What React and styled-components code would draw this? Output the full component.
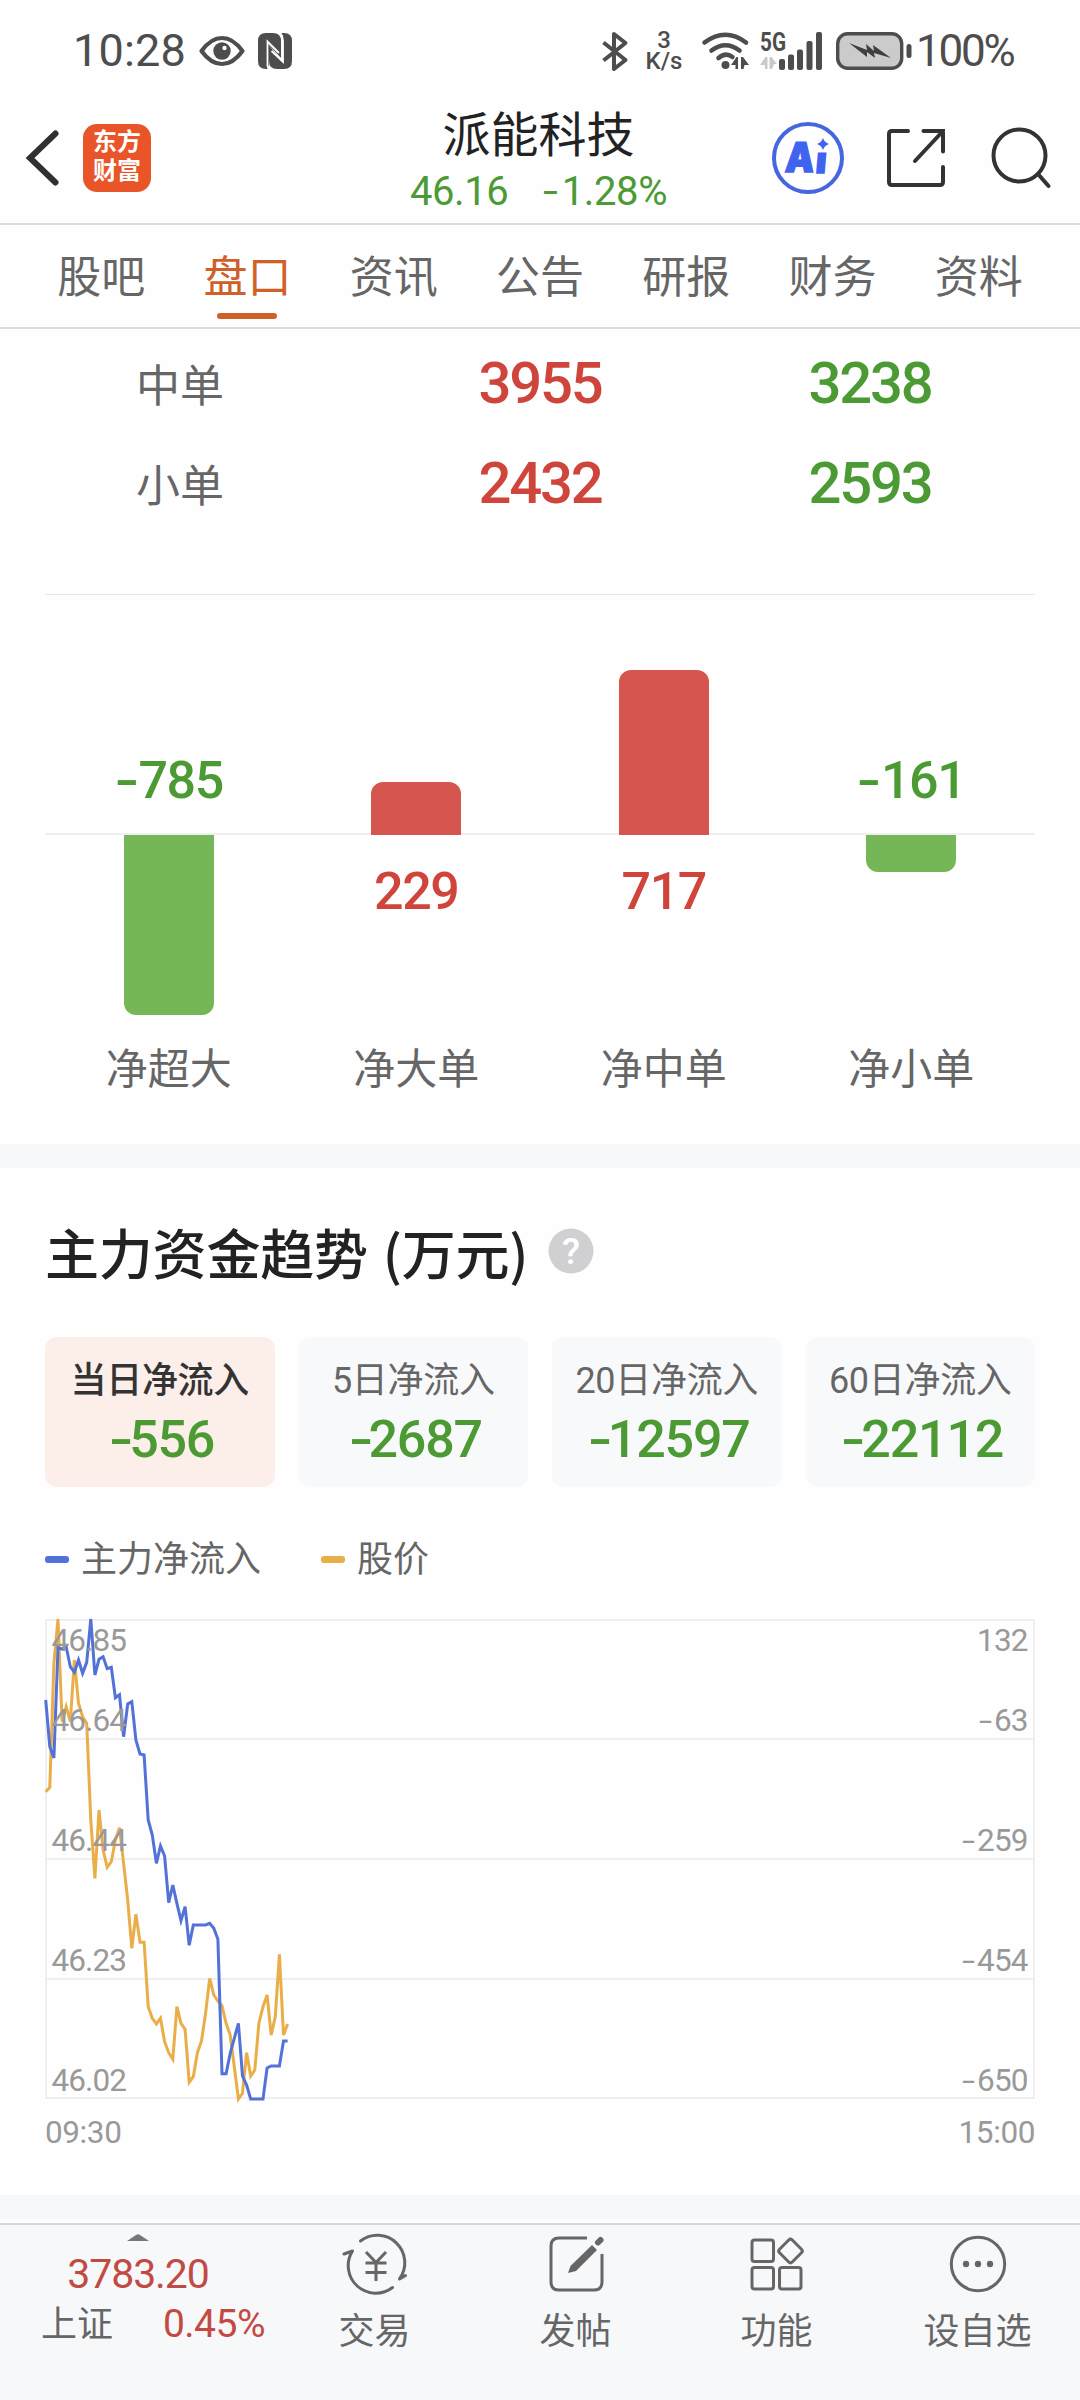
import React from 'react';
import styled, { createGlobalStyle } from 'styled-components';

const GlobalStyles = createGlobalStyle`
  * {
    box-sizing: border-box;
  }
  body {
    margin: 0;
    background: #fefefe;
    color: #666;
    font-family: Roboto, 'Noto Sans CJK SC', sans-serif;
  }
  svg {
    display: block;
    overflow: visible;
  }
`;

const colors = {
  up: '#d0453b',
  down: '#4b9a33',
  flow: '#5272d8',
  price: '#eaae48',
};

const PageStyles = styled.div`
  width: 1080px;
  height: 2400px;
  display: flex;
  flex-direction: column;
  overflow: hidden;
`;

const StatusBarStyles = styled.div`
  height: 102px;
  padding: 0 67px 0 73px;
  display: flex;
  align-items: center;
  justify-content: space-between;
  color: #4d4d4d;
  font-size: 45px;
  line-height: 104px;
  .group {
    display: flex;
    align-items: center;
  }
  .clock {
    width: 126px;
    letter-spacing: 0.2px;
  }
  .speed {
    width: 42px;
    margin: 0 17px 0 15px;
    display: flex;
    flex-direction: column;
    font-size: 24px;
    font-weight: 500;
    line-height: 21px;
    text-align: center;
  }
  .percent {
    width: 97px;
    margin-left: 4px;
    font-size: 44px;
    letter-spacing: -2.2px;
    white-space: nowrap;
  }
`;

const EyeIcon = styled.svg`
  margin-right: 13px;
`;

const BatteryIcon = styled.svg`
  margin-left: 14px;
`;

const SignalIcon = styled.svg`
  margin-left: 10px;
`;

const HeaderStyles = styled.header`
  height: 123px;
  padding: 0 29px 0 26px;
  display: grid;
  grid-template-columns: 280px 1fr 280px;
  border-bottom: 2px solid #dcdcdc;
  .left {
    display: flex;
    align-items: center;
    gap: 25px;
    padding-bottom: 10px;
  }
  .right {
    display: flex;
    align-items: center;
    justify-content: flex-end;
    padding-bottom: 10px;
  }
  .title {
    display: flex;
    flex-direction: column;
    align-items: center;
    padding-top: 3px;
  }
  h1 {
    margin: 0;
    color: #222;
    font-size: 48px;
    font-weight: 400;
    line-height: 62px;
  }
`;

const ShareIcon = styled.svg`
  margin: 0 46px 0 43px;
`;

const LogoStyles = styled.div`
  width: 68px;
  height: 68px;
  border-radius: 14px;
  padding-top: 4px;
  background: #e95428;
  color: #fff;
  font-size: 24px;
  font-weight: 700;
  line-height: 29px;
  text-align: center;
`;

const QuoteStyles = styled.div`
  display: flex;
  gap: 35px;
  color: ${colors.down};
  font-size: 40px;
  line-height: 50px;
  letter-spacing: -0.4px;
`;

const MinusStyles = styled.span`
  display: inline-block;
  width: 0.46em;
  letter-spacing: 0;
  transform: scaleX(1.35);
  transform-origin: 0 50%;
`;

const TabsStyles = styled.nav`
  height: 104px;
  padding: 0 28px;
  display: grid;
  grid-template-columns: repeat(7, 1fr);
  border-bottom: 2px solid #dcdcdc;
`;

const TabStyles = styled.div`
  display: flex;
  flex-direction: column;
  align-items: center;
  color: ${({ $active }) => ($active ? '#d0602a' : '#666')};
  font-size: 44px;
  line-height: 87px;
  padding-top: 10px;
  height: 102px;
  &::after {
    content: '';
    width: 60px;
    height: 6px;
    margin-top: -9px;
    border-radius: 3px;
    background: ${({ $active }) => ($active ? '#d0602a' : 'transparent')};
  }
`;

const OrderTableStyles = styled.div`
  height: 266px;
  margin: 0 45px;
  padding-top: 4px;
  border-bottom: 1px solid #e6e6e6;
`;

const OrderRowStyles = styled.div`
  height: 100px;
  display: grid;
  grid-template-columns: repeat(3, 1fr);
  text-align: center;
  line-height: 100px;
  .label {
    padding: 4px 60px 0 0;
    font-size: 44px;
  }
`;

const OrderValue = styled.div`
  color: ${({ $tone }) => colors[$tone]};
  font-size: 58px;
  font-weight: 500;
  letter-spacing: -2.2px;
`;

const NetBarsStyles = styled.div`
  height: 549px;
  margin: 0 45px;
  display: grid;
  grid-template-columns: repeat(4, 1fr);
`;

const NetColumnStyles = styled.div`
  display: grid;
  grid-template-rows: 240px 180px 1fr;
  justify-items: center;
  .half {
    width: 100%;
    display: flex;
    flex-direction: column;
    align-items: center;
  }
  .upper {
    justify-content: flex-end;
    border-bottom: 2px solid #efefef;
  }
  .label {
    padding-top: 24px;
    font-size: 42px;
    line-height: 62px;
  }
`;

const NetValue = styled.div`
  padding: ${({ $tone }) => ($tone === 'up' ? '26px 0 0' : '0 0 21px')};
  color: ${({ $tone }) => colors[$tone]};
  font-size: 52px;
  font-weight: 500;
  line-height: 62px;
  letter-spacing: -1.4px;
`;

const NetBar = styled.div`
  width: 90px;
  flex-shrink: 0;
  margin-bottom: ${({ $tone }) => ($tone === 'up' ? '-2px' : '0')};
  background: ${({ $tone }) => ($tone === 'up' ? '#d7554f' : '#75b757')};
  border-radius: ${({ $tone }) => ($tone === 'up' ? '12px 12px 0 0' : '0 0 12px 12px')};
`;

const BandStyles = styled.div`
  height: 24px;
  background: #f7f8fa;
`;

const TrendStyles = styled.section`
  height: 1027px;
  padding: 44px 45px 0;
`;

const TrendTitleStyles = styled.div`
  display: flex;
  align-items: center;
  gap: 20px;
  height: 80px;
  h2 {
    margin: 0;
    color: #222;
    font-family: 'Noto Sans CJK SC', sans-serif;
    font-size: 54px;
    font-weight: 500;
    line-height: 80px;
    letter-spacing: -0.2px;
    word-spacing: 3px;
  }
  svg {
    margin-top: -3px;
  }
`;

const PeriodsStyles = styled.div`
  margin-top: 45px;
  display: grid;
  grid-template-columns: repeat(4, 1fr);
  gap: 24px;
`;

const PeriodCardStyles = styled.div`
  height: 150px;
  border-radius: 12px;
  padding-top: 18px;
  background: ${({ $active }) => ($active ? '#fceee8' : '#f8f9fb')};
  text-align: center;
  .name {
    color: ${({ $active }) => ($active ? '#333' : '#666')};
    font-size: 36px;
    font-weight: ${({ $active }) => ($active ? 500 : 400)};
    line-height: 52px;
    letter-spacing: -0.3px;
    white-space: nowrap;
  }
  .value {
    color: ${colors.down};
    font-size: 52px;
    font-weight: 500;
    line-height: 65px;
    letter-spacing: -1.2px;
  }
`;

const LegendStyles = styled.div`
  height: 133px;
  padding-top: 45px;
  display: flex;
  gap: 60px;
  font-size: 36px;
  line-height: 58px;
`;

const LegendItem = styled.div`
  display: flex;
  align-items: center;
  height: 56px;
  &::before {
    content: '';
    width: 24px;
    height: 7px;
    margin: 0 12px 2px 0;
    border-radius: 3px;
    background: ${({ $tone }) => colors[$tone]};
  }
`;

const TimeAxisStyles = styled.div`
  margin-top: 12px;
  display: flex;
  justify-content: space-between;
  color: #999;
  font-size: 31.5px;
  line-height: 44px;
  letter-spacing: -0.4px;
`;

const BottomBarStyles = styled.footer`
  height: 177px;
  margin-top: 4px;
  display: grid;
  grid-template-columns: 274px repeat(4, 201px);
  border-top: 2px solid #d6d8dc;
  background: #f7f8fa;
`;

const IndexStyles = styled.div`
  display: flex;
  flex-direction: column;
  align-items: center;
  padding: 9px 0 0 2px;
  .points {
    margin-top: 8px;
    color: #c34a43;
    font-size: 41px;
    line-height: 50px;
    letter-spacing: -1.1px;
  }
  .row {
    width: 100%;
    padding: 0 9px 0 39px;
    display: flex;
    justify-content: space-between;
    font-size: 36px;
    line-height: 52px;
  }
  .change {
    color: #c34a43;
    font-size: 39px;
    line-height: 51px;
    letter-spacing: -0.5px;
  }
`;

const ActionStyles = styled.div`
  display: flex;
  flex-direction: column;
  align-items: center;
  padding-top: 9px;
  font-size: 36px;
  line-height: 54px;
  svg {
    margin-bottom: 11px;
  }
`;

const tabs = ['股吧', '盘口', '资讯', '公告', '研报', '财务', '资料'];

const orders = [
  { label: '中单', buy: '3955', sell: '3238' },
  { label: '小单', buy: '2432', sell: '2593' },
];

const netOrders = [
  { label: '净超大', value: -785, height: 180 },
  { label: '净大单', value: 229, height: 53 },
  { label: '净中单', value: 717, height: 165 },
  { label: '净小单', value: -161, height: 37 },
];

const periods = [
  { name: '当日净流入', value: -556 },
  { name: '5日净流入', value: -2687 },
  { name: '20日净流入', value: -12597 },
  { name: '60日净流入', value: -22112 },
];

// one sample per minute, measured down the plot in thirds of a pixel
const flowSeries = [
  300, 440, 474, 143, 147, 140, 200, 217, 180, 220, 187, 57, 225, 178, 170,
  206, 202, 293, 284, 410, 312, 305, 420, 462, 465, 660, 705, 790, 738, 768,
  908, 855, 910, 962, 920, 1036, 975, 975, 975, 975, 970, 985, 1018, 1421,
  1421, 1360, 1315, 1270, 1428, 1455, 1497, 1497, 1497, 1497, 1404, 1398,
  1398, 1398, 1323, 1323,
];
const priceSeries = [
  575, 562, 190, 57, 365, 320, 365, 180, 310, 350, 370, 660, 835, 630, 750,
  802, 785, 720, 683, 790, 900, 1045, 943, 1027, 1027, 1220, 1255, 1272, 1255,
  1325, 1358, 1378, 1220, 1270, 1288, 1447, 1430, 1358, 1323, 1240, 1135,
  1185, 1203, 1217, 1270, 1305, 1400, 1497, 1480, 1358, 1428, 1410, 1270,
  1220, 1185, 1305, 1250, 1063, 1305, 1272,
];

const axisLabels = [
  { y: 31, price: '46.85', flow: '132' },
  { y: 111, price: '46.64', flow: '-63' },
  { y: 231, price: '46.44', flow: '-259' },
  { y: 351, price: '46.23', flow: '-454' },
  { y: 471, price: '46.02', flow: '-650' },
];

const toPoints = series =>
  series.map((y, i) => `${(i * 4.1 + 0.7).toFixed(1)},${((y - 60) / 3).toFixed(1)}`).join(' ');

function Signed({ value }) {
  const text = String(value);
  if (!text.startsWith('-')) return text;
  return (
    <>
      <MinusStyles>-</MinusStyles>
      {text.slice(1)}
    </>
  );
}

function StatusBar() {
  return (
    <StatusBarStyles>
      <div className="group">
        <span className="clock">10:28</span>
        <EyeIcon width="46" height="32" viewBox="0 0 46 32">
          <path d="M2.500 16C9 7 16 3 23 3s14 4 20.500 13C37 25 30 29 23 29S9 25 2.500 16Z" fill="none" stroke="#4d4d4d" strokeWidth="4.200" strokeLinejoin="round" />
          <circle cx="23" cy="16" r="8.700" fill="#4d4d4d" />
          <circle cx="25.500" cy="13" r="2.200" fill="#fff" />
        </EyeIcon>
        <svg width="34" height="36" viewBox="0 0 34 36">
          <path d="M8 0H15Q23 0 23 8V25L11 12V36H8Q0 36 0 28V8Q0 0 8 0Z" fill="#4d4d4d" />
          <path d="M24 0H26Q34 0 34 8V28Q34 36 26 36H19Q11 36 11 28V12L23 28L25 27V8Q25 3 22 0Z" fill="#4d4d4d" />
          <path d="M10.500 36Q9 33 9.500 28V8.500L21 20M22.500 0Q25 3 25 8V29L13.500 18" fill="none" stroke="#fff" strokeWidth="1.800" />
        </svg>
      </div>
      <div className="group">
        <svg width="26" height="39" viewBox="0 0 26 39">
          <path d="M1.500 10.500 23.500 28 12 37V2l11.500 9L1.500 28.500" fill="none" stroke="#4d4d4d" strokeWidth="4" strokeLinejoin="round" />
        </svg>
        <div className="speed">
          <span>3</span>
          <span>K/s</span>
        </div>
        <svg width="48" height="38" viewBox="0 0 48 38">
          <g fill="none" stroke="#4d4d4d" strokeWidth="4.600" strokeLinecap="round">
            <path d="M2.500 10.500Q23.500-5 44 10.500" />
            <path d="M9.500 18.500Q23.500 8 37.500 18.500" />
            <path d="M16.500 26Q23.500 20 30.500 25" />
          </g>
          <circle cx="23.500" cy="33" r="4" fill="#4d4d4d" />
          <path d="M36 25v12h-2.500v-4H29l5.500-8ZM39 25h2l6 8h-4.500l-1 4H39Z" fill="#4d4d4d" />
        </svg>
        <SignalIcon width="62" height="38" viewBox="0 0 62 38">
          <text x="0" y="18.500" fontSize="25" fontWeight="700" fill="#4d4d4d" textLength="26" lengthAdjust="spacingAndGlyphs">5G</text>
          <path d="M7.500 25v12H5v-4H0l5.500-8ZM9.500 25h2l5.500 7h-3l-2 5H9.500Z" fill="#c9c9c9" />
          <g fill="#4d4d4d">
            <rect x="19" y="27" width="6" height="11" rx="2" />
            <rect x="28" y="22.500" width="6" height="15.500" rx="2" />
            <rect x="37" y="17.500" width="6" height="20.500" rx="2" />
            <rect x="46.500" y="9" width="6" height="29" rx="2" />
            <rect x="56" y="0" width="6" height="38" rx="2" />
          </g>
        </SignalIcon>
        <BatteryIcon width="76" height="38" viewBox="0 0 76 38">
          <rect x="1.700" y="1.700" width="64" height="34.600" rx="10" fill="#cbcbcb" stroke="#4d4d4d" strokeWidth="3.400" />
          <path d="M13 11 31 18 30 12 38 19 37 13 55 26 38 21 39 26 31 20 31 25Z" fill="#3f3f3f" />
          <rect x="70.500" y="12" width="5" height="14" rx="2.500" fill="#4d4d4d" />
        </BatteryIcon>
        <span className="percent">100%</span>
      </div>
    </StatusBarStyles>
  );
}

function Header() {
  return (
    <HeaderStyles>
      <div className="left">
        <svg width="32" height="56" viewBox="0 0 32 56">
          <path d="M29.500 3.500 4 28l25.500 24.500" fill="none" stroke="#303030" strokeWidth="6" strokeLinecap="round" strokeLinejoin="miter" />
        </svg>
        <LogoStyles>
          <div>东方</div>
          <div>财富</div>
        </LogoStyles>
      </div>
      <div className="title">
        <h1>派能科技</h1>
        <QuoteStyles>
          <span>46.16</span>
          <span>
            <Signed value="-1.28%" />
          </span>
        </QuoteStyles>
      </div>
      <div className="right">
        <svg width="72" height="72" viewBox="0 0 72 72">
          <circle cx="36" cy="36" r="34" fill="none" stroke="#4566dc" strokeWidth="4" />
          <g fill="#4063f0" stroke="#4063f0" strokeWidth="1.500" fontFamily="Inter" fontWeight="900" fontSize="41">
            <text transform="translate(12.500 49.500) skewX(-4)" textLength="29" lengthAdjust="spacingAndGlyphs">A</text>
            <text transform="translate(43 50.500) skewX(-5)" fontSize="36">ı</text>
          </g>
          <path d="M51 16Q52.500 20.500 57 22Q52.500 23.500 51 28Q49.500 23.500 45 22Q49.500 20.500 51 16Z" fill="#4063f0" />
        </svg>
        <ShareIcon width="58" height="58" viewBox="0 0 58 58">
          <g fill="none" stroke="#333" strokeWidth="4" strokeLinecap="round">
            <path d="M21 2H5Q2 2 2 5V53Q2 56 5 56H53Q56 56 56 53V38" />
            <path d="M36.500 2H56V22.500M56 2 28 32" />
          </g>
        </ShareIcon>
        <svg width="60" height="62" viewBox="0 0 60 62">
          <g fill="none" stroke="#333" strokeWidth="4" strokeLinecap="round">
            <circle cx="28.500" cy="28.500" r="26" />
            <path d="M47 47 57.500 59" />
          </g>
        </svg>
      </div>
    </HeaderStyles>
  );
}

function TrendChart() {
  return (
    <svg width="990" height="479" viewBox="0 0 990 479" fontSize="31.500" fill="none">
      <g stroke="#efefef" strokeWidth="2">
        <rect x="1" y="0" width="988" height="478" />
        <path d="M1 119H989M1 239H989M1 359H989" />
      </g>
      <polyline points={toPoints(priceSeries)} stroke={colors.price} strokeWidth="3" />
      <polyline points={toPoints(flowSeries)} stroke={colors.flow} strokeWidth="3" />
      {axisLabels.map(({ y, price, flow }) => (
        <g key={price} fill="#999" letterSpacing="-0.9">
          <text x="6.500" y={y}>{price}</text>
          <text x="982.500" y={y} textAnchor="end">{flow.replace('-', '')}</text>
          {flow.startsWith('-') && (
            <text transform={`translate(${983 - (flow.length - 1) * 17.2 - 14.5} ${y}) scale(1.5 1)`}>-</text>
          )}
        </g>
      ))}
    </svg>
  );
}

const actions = [
  {
    label: '交易',
    icon: (
      <>
        <path d="M15.500 7A27.500 27.500 0 0 1 54.500 45L60.500 41.500" />
        <path d="M47.500 53.500A27.500 27.500 0 0 1 7.500 17L-1 20" />
        <path d="M21 18 31 28.500 41 18M20.500 29H41.500M20.500 38.500H41.500M31 28.500V47" strokeLinecap="butt" />
      </>
    ),
  },
  {
    label: '发帖',
    icon: (
      <>
        <path d="M41 4H13Q5 4 5 12V48Q5 56 13 56H48Q56 56 56 48V20" strokeLinecap="butt" />
        <path d="M22 39 24.500 32 46 11 51 16 30 37Z" fill="#666" stroke="none" />
        <path d="M52 8.500 54.500 6" strokeWidth="6" />
      </>
    ),
  },
  {
    label: '功能',
    icon: (
      <>
        <rect x="5" y="6" width="21.500" height="21.500" rx="2.500" />
        <rect x="5" y="33.500" width="21.500" height="21.500" rx="2.500" />
        <rect x="32.500" y="33.500" width="21.500" height="21.500" rx="2.500" />
        <rect x="34.500" y="8" width="18" height="18" rx="2.500" transform="rotate(45 43.500 17)" />
      </>
    ),
  },
  {
    label: '设自选',
    icon: (
      <>
        <circle cx="30" cy="30" r="26.700" />
        <g fill="#666" stroke="none">
          <circle cx="18" cy="30" r="3.200" />
          <circle cx="30" cy="30" r="3.200" />
          <circle cx="42" cy="30" r="3.200" />
        </g>
      </>
    ),
  },
];

function BottomBar() {
  return (
    <BottomBarStyles>
      <IndexStyles>
        <svg width="22" height="7" viewBox="0 0 22 7">
          <path d="M0 7 9 1Q11-.5 13 1L22 7Z" fill="#777" />
        </svg>
        <div className="points">3783.20</div>
        <div className="row">
          <span>上证</span>
          <span className="change">0.45%</span>
        </div>
      </IndexStyles>
      {actions.map(({ label, icon }) => (
        <ActionStyles key={label}>
          <svg width="60" height="60" viewBox="0 0 60 60" fill="none" stroke="#666" strokeWidth="3" strokeLinecap="round" strokeLinejoin="round">
            {icon}
          </svg>
          <span>{label}</span>
        </ActionStyles>
      ))}
    </BottomBarStyles>
  );
}

function App() {
  return (
    <PageStyles>
      <GlobalStyles />
      <StatusBar />
      <Header />
      <TabsStyles>
        {tabs.map(tab => (
          <TabStyles key={tab} $active={tab === '盘口'}>
            {tab}
          </TabStyles>
        ))}
      </TabsStyles>
      <OrderTableStyles>
        {orders.map(({ label, buy, sell }) => (
          <OrderRowStyles key={label}>
            <div className="label">{label}</div>
            <OrderValue $tone="up">{buy}</OrderValue>
            <OrderValue $tone="down">{sell}</OrderValue>
          </OrderRowStyles>
        ))}
      </OrderTableStyles>
      <NetBarsStyles>
        {netOrders.map(({ label, value, height }) => {
          const tone = value > 0 ? 'up' : 'down';
          const bar = <NetBar $tone={tone} style={{ height }} />;
          const text = (
            <NetValue $tone={tone}>
              <Signed value={value} />
            </NetValue>
          );
          return (
            <NetColumnStyles key={label}>
              <div className="half upper">{tone === 'up' ? bar : text}</div>
              <div className="half">{tone === 'up' ? text : bar}</div>
              <div className="label">{label}</div>
            </NetColumnStyles>
          );
        })}
      </NetBarsStyles>
      <BandStyles />
      <TrendStyles>
        <TrendTitleStyles>
          <h2>主力资金趋势 (万元)</h2>
          <svg width="46" height="46" viewBox="0 0 46 46">
            <circle cx="23" cy="23" r="22.500" fill="#d0d0d3" />
            <text x="23" y="36" fontSize="37" fontWeight="500" fill="#fff" textAnchor="middle">?</text>
          </svg>
        </TrendTitleStyles>
        <PeriodsStyles>
          {periods.map(({ name, value }, idx) => (
            <PeriodCardStyles key={name} $active={idx === 0}>
              <div className="name">{name}</div>
              <div className="value">
                <Signed value={value} />
              </div>
            </PeriodCardStyles>
          ))}
        </PeriodsStyles>
        <LegendStyles>
          <LegendItem $tone="flow">主力净流入</LegendItem>
          <LegendItem $tone="price">股价</LegendItem>
        </LegendStyles>
        <TrendChart />
        <TimeAxisStyles>
          <span>09:30</span>
          <span>15:00</span>
        </TimeAxisStyles>
      </TrendStyles>
      <BandStyles />
      <BottomBar />
    </PageStyles>
  );
}

export default App;
